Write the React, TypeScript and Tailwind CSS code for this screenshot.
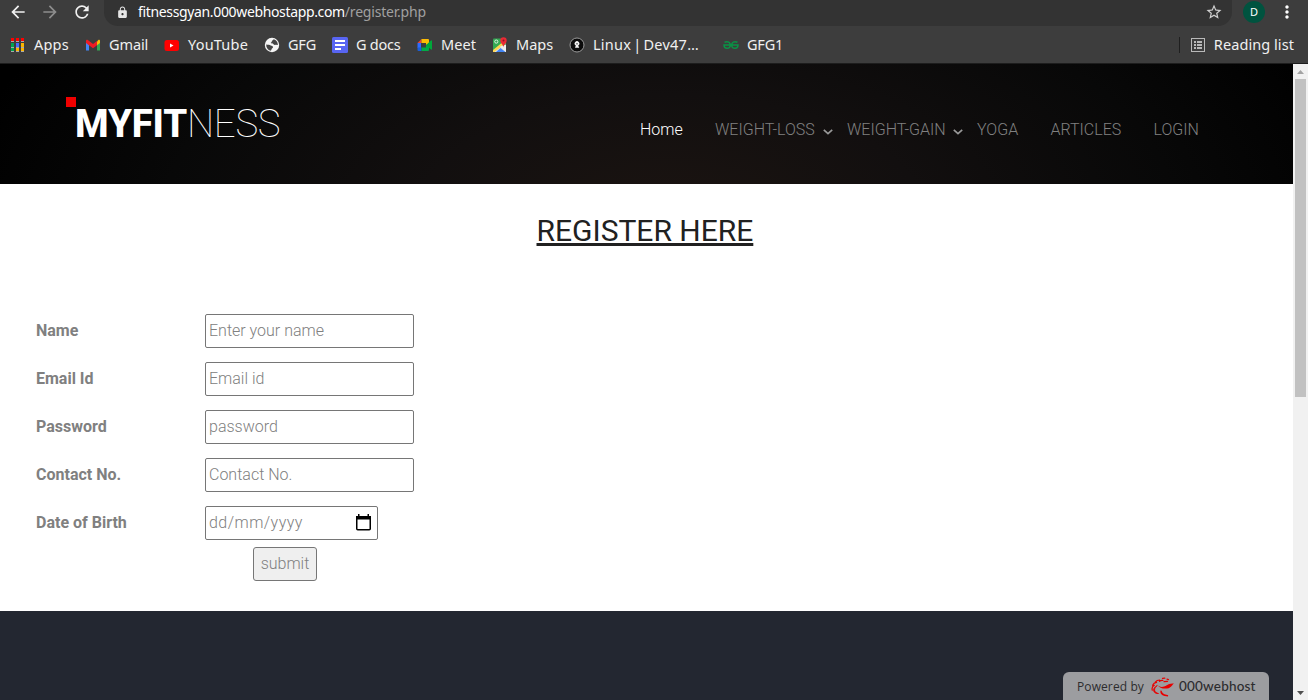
import React from "react";
import { MdArrowBack, MdArrowForward, MdRefresh, MdLock, MdStarBorder, MdMoreVert } from "react-icons/md";

function AppsIcon() {
  const colors = ["#f00", "#f00", "#f00", "#00a550", "#4a6cf7", "#fbb400", "#00a550", "#fbb400", "#fbb400"];
  return (
    <svg width="16" height="16" viewBox="0 0 16 16" shapeRendering="crispEdges">
      {colors.map((c, i) => (
        <rect key={i} x={1 + (i % 3) * 5} y={1 + Math.floor(i / 3) * 5} width="3" height={i < 3 ? 3 : 4} fill={c} />
      ))}
      <path d="M1 4.500h13M1 10.500h13M1 14.500h13" stroke="#aaa" strokeWidth="1" strokeDasharray="3 2" />
    </svg>
  );
}

function GmailIcon() {
  return (
    <svg width="16" height="16" viewBox="0 0 16 16">
      <path d="M1 4v9.500h3V7.500z" fill="#4285f4" />
      <path d="M15 4v9.500h-3V7.500z" fill="#34a853" />
      <path d="M12 4.500 13.300 3c.8-.5 1.700 0 1.700 1v2l-3 2.300z" fill="#fbbc04" />
      <path d="M4 8.300 1 6V4c0-1 1-1.500 1.800-.9L8 7l4-3v4.300l-4 3z" fill="#ed1c24" />
    </svg>
  );
}

function YouTubeIcon() {
  return (
    <svg width="16" height="16" viewBox="0 0 16 16">
      <rect x=".5" y="3" width="14.500" height="11" rx="2.500" fill="#f00" />
      <path d="M6 6.500v4l3.500-2z" fill="#fff" />
    </svg>
  );
}

function GlobeIcon() {
  return (
    <svg width="16" height="16" viewBox="0 0 16 16">
      <circle cx="8" cy="8" r="7.200" fill="#f5f5f5" />
      <path d="M2.200 7.500c2 .3 3.500.2 4.500 1 .8.700 2.500.2 2.300 1.700-.2 1.200-1.300.8-1.500 2.300-.1.700-.5 1-1 1.300C4 13 2 10.500 2.200 7.500zM9.500 2.200c0 1.200-1.700 1-1.700 2.200 0 1-1.300.8-1 1.600.4.800 2 .1 2.500.9.500.9 1.500 1.300 2.500.9.900-.4 1.200.2 2 .2C14 5 12 2.700 9.500 2.200z" fill="#444" />
    </svg>
  );
}

function DocsIcon() {
  return (
    <svg width="16" height="16" viewBox="0 0 16 16">
      <rect width="16" height="16" rx="1.500" fill="#5865f2" />
      <path d="M3 4h10M3 8h10M3 12h6" stroke="#fff" strokeWidth="1.800" />
    </svg>
  );
}

function MeetIcon() {
  return (
    <svg width="16" height="16" viewBox="0 0 16 16">
      <path d="M4.500 2v4H.5z" fill="#ea4335" />
      <path d="M.5 6h3.500v5H.5z" fill="#2f6bff" />
      <path d="M.5 10.500h4V14h-3q-1 0-1-1z" fill="#1b5fd8" />
      <path d="M4.500 2H11q1 0 1 1v4l-3 1V6H4.500z" fill="#fbbc04" />
      <path d="M4.500 10.500H9V8l3 1v4q0 1-1 1H4.500z" fill="#00ac47" />
      <path d="M9 8l5-4.500q1-.5 1 .5v8q0 1-1 .5z" fill="#00a83a" />
    </svg>
  );
}

function MapsIcon() {
  return (
    <svg width="16" height="16" viewBox="0 0 16 16">
      <rect x="1" y="1.500" width="13" height="13.500" rx="1" fill="#34a853" />
      <path d="M1 14.500 8 8l6 6v1H1z" fill="#dce3ea" />
      <path d="M4 15l4.500-4 5 4z" fill="#4285f4" />
      <path d="M1 13 12 4l2 2L2.500 15H1z" fill="#ffd54f" />
      <path d="M8 9.500l6 5.500V7.500z" fill="#eee" />
      <circle cx="4.300" cy="4.600" r="1.600" fill="none" stroke="#fff" strokeWidth=".8" />
      <path d="M11.500 10.500C11.500 7.500 8.300 6.500 8.300 3.500a3.200 3.200 0 0 1 6.400 0c0 3-3.200 4-3.200 7z" fill="#ea2a35" />
      <circle cx="11.500" cy="3.600" r="1" fill="#8c1521" />
    </svg>
  );
}

function LinuxIcon() {
  return (
    <svg width="16" height="16" viewBox="0 0 16 16">
      <circle cx="8" cy="8" r="7" fill="#0b0b0b" stroke="#999" strokeWidth="1" />
      <path d="M6 10.800h4.200L9.200 8.500a2.300 2.300 0 1 0-2.400 0z" fill="#f3f3f3" />
      <path d="M7 6.400h2v.9H7z" fill="#222" />
    </svg>
  );
}

function GeeksIcon() {
  return (
    <svg width="16" height="16" viewBox="0 0 16 16" fill="none" stroke="#0a9345" strokeWidth="1.500">
      <path d="M1.500 5.200C5 3.700 7.300 5.500 7.300 8S5.800 11.300 4 11.300 1 10 1 8h14c0 2-1.200 3.300-3 3.300S8.700 10.500 8.700 8s2.300-4.300 5.800-2.800" />
    </svg>
  );
}

function ReadingIcon() {
  return (
    <svg width="14" height="14" viewBox="0 0 14 14" fill="none" stroke="#b9b9b9" shapeRendering="crispEdges">
      <path d="M.5.500h13v13H.5z" />
      <path d="M3 4h2M3 7h2M3 10h2M6 4h5M6 7h5M6 10h5" strokeWidth="2" />
    </svg>
  );
}

function HostLogo() {
  return (
    <svg width="24" height="20" viewBox="0 0 24 20" fill="none" stroke="#e80000" strokeLinecap="round">
      <path d="M7 8.200c2 2.600 6 1.800 8.300.2 2.200-1.600 4.700-2.300 8-1.900-2.300.6-2.300 4.500-7.300 5-4.500.4-8-.9-9-3.300z" fill="#e80000" stroke="none" />
      <path d="M9 8.300c3 1 5 .1 7-1.200" stroke="#9c9da0" strokeWidth="1.200" />
      <path d="M6 8.700c-4 2.600-3 7 1.500 7.800C3 17.300-.3 12 6 8.700z" fill="#e80000" strokeWidth=".8" />
      <path d="M10 13.700c-.8 3.300 2.200 5 7 5.100-3-1-6.500-1-7-5.100z" fill="#e80000" strokeWidth="1.200" />
      <path d="M1.300 13.200c-.7-2 .2-3.800 2-4.900M1.600 8.300c.7-1.700 2.200-2.800 4-3M4.300 5c1.200-1.500 2.800-2 4.300-2M8.500 4.300c1-.8 2-1.100 3.300-.9M11.500 1.400l2.300-.2M13 4.700l3.500-.4M16 2.200l1.500.4" strokeWidth="1.200" />
    </svg>
  );
}

type Mark = { label: React.ReactNode; icon: React.ReactNode; box: string; text: string };

const bookmarks: Mark[] = [
  { label: "Apps", icon: <AppsIcon />, box: "w-[75px]", text: "tracking-[0.2px]" },
  { label: "Gmail", icon: <GmailIcon />, box: "w-[79px]", text: "tracking-[-0.1px]" },
  { label: "YouTube", icon: <YouTubeIcon />, box: "w-[100px]", text: "tracking-[0.2px]" },
  { label: "GFG", icon: <GlobeIcon />, box: "w-[68px]", text: "tracking-[-0.2px]" },
  { label: "G docs", icon: <DocsIcon />, box: "w-[85px]", text: "tracking-[-0.25px]" },
  { label: "Meet", icon: <MeetIcon />, box: "w-[75px]", text: "tracking-[0.1px]" },
  { label: "Maps", icon: <MapsIcon />, box: "w-[77px]", text: "tracking-[0px]" },
  { label: <>Linux <span className="-mx-[2px]">|</span> Dev47…</>, icon: <LinuxIcon />, box: "w-[154px]", text: "tracking-[0.25px]" },
  { label: "GFG1", icon: <GeeksIcon />, box: "w-[70px]", text: "tracking-[-0.2px]" },
];

function BrowserChrome() {
  return (
    <div className="h-16 shrink-0 border-b border-[#1d1d1d] bg-[#3d3d3d] font-['Noto_Sans',sans-serif] text-[#f0f0f0]">
      <div className="flex h-[26px] items-start">
        <div className="flex w-[104px] gap-3 pl-2 pt-[2px]">
          <MdArrowBack size={20} className="shrink-0 text-[#f1f1f1]" />
          <MdArrowForward size={20} className="shrink-0 text-[#8d8d8d]" />
          <MdRefresh size={20} className="shrink-0 text-[#f1f1f1]" />
        </div>
        <div className="flex h-[26px] w-[1128px] items-center rounded-b-[14px] bg-[#333] pb-[2px] pl-3">
          <MdLock size={13} className="text-[#e6e6e6]" />
          <span className="ml-[9px] whitespace-nowrap text-sm tracking-[-0.35px] text-white">fitnessgyan.000webhostapp.com<span className="tracking-[-0.2px] text-[#a0a0a0]">/register.php</span></span>
          <MdStarBorder size={18} className="ml-auto mr-[9px] text-[#d0d0d0]" />
        </div>
        <div className="ml-[11px] mt-[1px] flex size-[22px] items-center justify-center rounded-full bg-[#00533f] text-[11px] text-white">D</div>
        <MdMoreVert size={20} className="ml-3 mt-[2px] shrink-0 text-white" />
      </div>
      <div className="flex h-[37px] items-center pl-[10px]">
        {bookmarks.map((b, i) => (
          <div key={i} className={`flex shrink-0 items-center gap-2 ${b.box}`}>
            <span className="shrink-0">{b.icon}</span>
            <span className={`whitespace-nowrap pb-[2px] text-[14.500px] leading-5 ${b.text}`}>{b.label}</span>
          </div>
        ))}
        <div className="ml-auto flex items-center pr-[14px]">
          <span className="mr-[11px] h-4 w-px bg-[#1f1f1f]" />
          <ReadingIcon />
          <span className="ml-[9px] whitespace-nowrap pb-[2px] text-[14.500px] leading-5 tracking-[0.07px]">Reading list</span>
        </div>
      </div>
    </div>
  );
}

function Chevron() {
  return (
    <svg width="10" height="6" viewBox="0 0 10 6" className="mt-1" fill="none" stroke="#999" strokeWidth="1.700">
      <path d="M.8.800 5 4.600 9.200.800" />
    </svg>
  );
}

function SiteHeader() {
  return (
    <header className="flex h-[120px] shrink-0 bg-black bg-[radial-gradient(ellipse_720px_340px_at_670px_150px,#1b1411_0%,#120f0f_35%,#080808_70%,#000_100%)]">
      <div className="flex pl-[66px] pt-[33px]">
        <span className="size-[10px] bg-[#f00000]" />
        <div className="-ml-px mt-[7px] whitespace-nowrap text-[38.400px] leading-[40px] text-white">
          <span className="font-extrabold tracking-[-0.2px]">MYFIT</span><span className="font-thin tracking-[-0.3px]">NESS</span>
        </div>
      </div>
      <nav className="ml-auto mt-[54px] flex h-6 w-[653px] items-center font-light text-[#808080]">
        <a className="w-[75px] text-white">Home</a>
        <a className="flex w-[132px] items-center justify-between pr-[14px]"><span>WEIGHT-LOSS</span><Chevron /></a>
        <a className="flex w-[130px] items-center justify-between pr-[14px]"><span>WEIGHT-GAIN</span><Chevron /></a>
        <a className="w-[73.500px]">YOGA</a>
        <a className="w-[103px]">ARTICLES</a>
        <a>LOGIN</a>
      </nav>
    </header>
  );
}

const fieldClass = "h-[34px] w-[209px] rounded-[2px] border border-[#767676] bg-white px-[3px] pb-[2px] text-base font-light outline-none placeholder:text-[#808080]";

function Row({ label, children }: { label: string; children: React.ReactNode }) {
  return (
    <div className="flex h-[34px] items-center">
      <label className="w-[169px] font-bold text-[#808080]">{label}</label>
      {children}
    </div>
  );
}

function RegisterForm() {
  return (
    <form className="flex flex-col gap-[14px] pl-9">
      <Row label="Name"><input className={fieldClass} placeholder="Enter your name" /></Row>
      <Row label="Email Id"><input className={fieldClass} placeholder="Email id" /></Row>
      <Row label="Password"><input type="password" className={fieldClass} placeholder="password" /></Row>
      <Row label="Contact No."><input className={fieldClass} placeholder="Contact No." /></Row>
      <Row label="Date of Birth">
        <div className="flex h-[34px] w-[173px] items-center justify-between rounded-[2px] border border-[#767676] pl-[3px] pr-[6px] font-light text-[#808080]">
          <span className="tracking-[0.45px]">dd/mm/yyyy</span>
          <svg width="15" height="17" viewBox="0 0 15 17" className="mb-[2px]" fill="none">
            <rect x=".75" y="2.750" width="13.500" height="13" rx="1" stroke="#000" strokeWidth="1.500" />
            <path d="M0 2h15v3.500H0zM2 0h1.500v2H2zM11.500 0H13v2h-1.500z" fill="#000" />
          </svg>
        </div>
      </Row>
      <button type="button" className="-mt-[7px] ml-[217px] h-[34px] w-16 rounded-[3px] border border-[#767676] bg-[#efefef] font-light text-[#808080]">submit</button>
    </form>
  );
}

function PoweredBadge() {
  return (
    <div className="mr-[24px] flex h-7 w-[206px] items-center rounded-t-md bg-[#9c9da0] pl-[14px] pt-px text-[#2c2c2e]">
      <span className="whitespace-nowrap font-['Open_Sans',sans-serif] text-xs tracking-[0.1px]">Powered by</span>
      <span className="ml-[7px] shrink-0"><HostLogo /></span>
      <span className="ml-[4px] whitespace-nowrap font-['Lato',sans-serif] text-[13.500px] font-medium tracking-[0.2px]">000webhost</span>
    </div>
  );
}

function Scrollbar() {
  return (
    <div className="flex w-[15px] shrink-0 flex-col items-center bg-[#f1f1f1]">
      <svg width="15" height="15" viewBox="0 0 15 15"><path d="M4 10h7L7.500 6z" fill="#a3a3a3" /></svg>
      <div className="h-[318px] w-[11px] bg-[#c1c1c1]" />
      <svg width="15" height="15" viewBox="0 0 15 15" className="mt-auto"><path d="M4 6h7l-3.500 4z" fill="#505050" /></svg>
    </div>
  );
}

export default function App() {
  return (
    <div className="flex h-[700px] w-[1308px] flex-col overflow-hidden bg-white font-['Roboto',sans-serif] text-base">
      <BrowserChrome />
      <div className="flex min-h-0 flex-1">
        <main className="flex flex-1 flex-col">
          <SiteHeader />
          <section className="h-[427px] pt-[29px]">
            <h1 className="mb-[65px] pl-[536.500px] text-[30px] leading-9 text-[#212121] underline">REGISTER HERE</h1>
            <RegisterForm />
          </section>
          <footer className="flex flex-1 items-end justify-end bg-[#232731]"><PoweredBadge /></footer>
        </main>
        <Scrollbar />
      </div>
    </div>
  );
}
